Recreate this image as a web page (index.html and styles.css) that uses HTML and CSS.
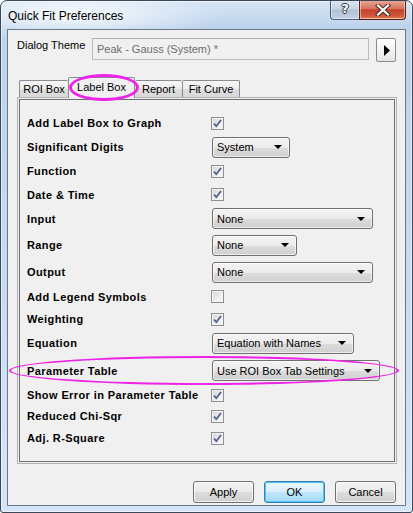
FILE: index.html
```
<!DOCTYPE html>
<html>
<head>
<meta charset="utf-8">
<link rel="stylesheet" href="styles.css">
</head>
<body>
<div class="window">
  <div class="titlebar">
    <span class="title">Quick Fit Preferences</span>
    <div class="caption-btns">
      <div class="cap help"><span class="cap-glyph">?</span></div>
      <div class="cap close">
        <svg width="16" height="12" viewBox="0 0 16 12"><path d="M3 1.5 L13 10.5 M13 1.5 L3 10.5" stroke="#4a2a22" stroke-width="4.2" stroke-linecap="square"/><path d="M3 1.5 L13 10.5 M13 1.5 L3 10.5" stroke="#ffffff" stroke-width="2.2" stroke-linecap="square"/></svg>
      </div>
    </div>
  </div>
  <div class="client">
    <div class="theme-row">
      <span class="theme-label">Dialog Theme</span>
      <div class="theme-input">Peak - Gauss (System) *</div>
      <div class="arrow-btn"><svg width="6" height="11" viewBox="0 0 6 11"><path d="M0 0 L6 5.5 L0 11 Z" fill="#000"/></svg></div>
    </div>
    <div class="tabs">
      <div class="tab t-roi">ROI Box</div>
      <div class="tab t-label active">Label Box<span class="hl-tab"></span></div>
      <div class="tab t-report">Report</div>
      <div class="tab t-fit">Fit Curve</div>
    </div>
    <div class="panel">
      <div class="panel-inner">
        <div class="grid">
          <div class="lbl">Add Label Box to Graph</div>
          <div class="ctl"><span class="chk on"><svg width="9" height="9" viewBox="0 0 9 9"><path d="M1 4.5 L3.3 7.2 L8 1" stroke="#4a5c92" stroke-width="1.7" fill="none"/></svg></span></div>

          <div class="lbl">Significant Digits</div>
          <div class="ctl"><div class="combo w-sys"><span>System</span><i class="dd"></i></div></div>

          <div class="lbl">Function</div>
          <div class="ctl"><span class="chk on"><svg width="9" height="9" viewBox="0 0 9 9"><path d="M1 4.5 L3.3 7.2 L8 1" stroke="#4a5c92" stroke-width="1.7" fill="none"/></svg></span></div>

          <div class="lbl">Date &amp; Time</div>
          <div class="ctl"><span class="chk on"><svg width="9" height="9" viewBox="0 0 9 9"><path d="M1 4.5 L3.3 7.2 L8 1" stroke="#4a5c92" stroke-width="1.7" fill="none"/></svg></span></div>

          <div class="lbl">Input</div>
          <div class="ctl"><div class="combo w-long"><span>None</span><i class="dd"></i></div></div>

          <div class="lbl">Range</div>
          <div class="ctl"><div class="combo w-range"><span>None</span><i class="dd"></i></div></div>

          <div class="lbl">Output</div>
          <div class="ctl"><div class="combo w-long"><span>None</span><i class="dd"></i></div></div>

          <div class="lbl">Add Legend Symbols</div>
          <div class="ctl"><span class="chk"></span></div>

          <div class="lbl">Weighting</div>
          <div class="ctl"><span class="chk on"><svg width="9" height="9" viewBox="0 0 9 9"><path d="M1 4.5 L3.3 7.2 L8 1" stroke="#4a5c92" stroke-width="1.7" fill="none"/></svg></span></div>

          <div class="lbl">Equation</div>
          <div class="ctl"><div class="combo w-eq"><span>Equation with Names</span><i class="dd"></i></div></div>

          <div class="lbl">Parameter Table</div>
          <div class="ctl"><div class="combo w-param"><span>Use ROI Box Tab Settings</span><i class="dd"></i></div></div>

          <div class="lbl">Show Error in Parameter Table</div>
          <div class="ctl"><span class="chk on"><svg width="9" height="9" viewBox="0 0 9 9"><path d="M1 4.5 L3.3 7.2 L8 1" stroke="#4a5c92" stroke-width="1.7" fill="none"/></svg></span></div>

          <div class="lbl">Reduced Chi-Sqr</div>
          <div class="ctl"><span class="chk on"><svg width="9" height="9" viewBox="0 0 9 9"><path d="M1 4.5 L3.3 7.2 L8 1" stroke="#4a5c92" stroke-width="1.7" fill="none"/></svg></span></div>

          <div class="lbl">Adj. R-Square</div>
          <div class="ctl"><span class="chk on"><svg width="9" height="9" viewBox="0 0 9 9"><path d="M1 4.5 L3.3 7.2 L8 1" stroke="#4a5c92" stroke-width="1.7" fill="none"/></svg></span></div>
        </div>
      </div>
      <span class="hl-param"></span>
    </div>
    <div class="buttons">
      <div class="btn">Apply</div>
      <div class="btn default">OK</div>
      <div class="btn">Cancel</div>
    </div>
  </div>
</div>
</body>
</html>
```

FILE: styles.css
```
* { box-sizing: border-box; }
html, body { margin: 0; padding: 0; background: #ffffff; }
body { font-family: "Liberation Sans", Arial, sans-serif; font-size: 11px; color: #000; }

.window {
  width: 413px;
  height: 513px;
  border: 1px solid #3b4656;
  border-radius: 7px 7px 3px 3px;
  padding: 0 6px 6px 6px;
  display: flex;
  flex-direction: column;
  overflow: hidden;
  background:
    radial-gradient(ellipse 150px 26px at 70px 14px, rgba(255,255,255,0.85), rgba(255,255,255,0) 100%),
    linear-gradient(180deg, #d6e5f5 0px, #bcd3ec 28px, #c3d8ef 200px, #d4e5f7 513px);
  box-shadow: inset 0 0 0 1px rgba(255,255,255,0.55);
}

.titlebar {
  height: 28px;
  flex-shrink: 0;
  display: flex;
  justify-content: space-between;
  align-items: flex-start;
}
.title {
  font-size: 12px;
  margin-left: 1px;
  margin-top: 8px;
  color: #000;
}
.caption-btns {
  display: flex;
  margin-top: -1px;
}
.cap {
  height: 20px;
  border: 1px solid #4b5b70;
  border-top: none;
  display: flex;
  align-items: center;
  justify-content: center;
  box-shadow: inset 0 0 0 1px rgba(255,255,255,0.45);
}
.help {
  width: 29px;
  border-radius: 0 0 0 4px;
  border-right: none;
  background: linear-gradient(180deg, #dfe8f2 0%, #c6d4e3 48%, #afc0d3 52%, #c2d3e6 100%);
}
.cap-glyph {
  font-family: "DejaVu Sans", sans-serif;
  font-weight: bold;
  font-size: 13px;
  color: #ffffff;
  text-shadow: 0 0 1px #2b3a4d, 1px 0 0 #2b3a4d, -1px 0 0 #2b3a4d, 0 1px 0 #2b3a4d, 0 -1px 0 #2b3a4d;
  margin-top: -2px;
}
.close {
  width: 47px;
  border-radius: 0 0 4px 0;
  border-color: #5a2217;
  background: linear-gradient(180deg, #e9a99a 0%, #d9735d 45%, #c2402a 52%, #d25a3d 85%, #e08a63 100%);
}

.client {
  flex: 1;
  min-height: 0;
  border: 1px solid #6a7888;
  background: #f0f0f0;
  display: flex;
  flex-direction: column;
}

.theme-row {
  margin-top: 8px;
  padding-left: 9px;
  height: 24px;
  flex-shrink: 0;
  display: flex;
  align-items: flex-start;
}
.theme-label {
  width: 75px;
  line-height: 15px;
}
.theme-input {
  width: 277px;
  height: 22px;
  border: 1px solid #bcbcbc;
  border-top-color: #aeaeae;
  background: #f0f0f0;
  color: #6d6d6d;
  padding: 3px 0 0 4px;
  line-height: 14px;
}
.arrow-btn {
  margin-left: 7px;
  width: 20px;
  height: 24px;
  border: 1px solid #8a8a8a;
  border-radius: 2px;
  background: linear-gradient(180deg, #ffffff 0%, #f3f3f3 50%, #e4e4e4 100%);
  display: flex;
  align-items: center;
  justify-content: center;
  padding-left: 1px;
}

.tabs {
  margin-top: 14px;
  height: 21px;
  flex-shrink: 0;
  padding-left: 11px;
  display: flex;
  align-items: flex-end;
  position: relative;
  z-index: 2;
}
.tab {
  height: 17px;
  border: 1px solid #898c95;
  border-bottom: none;
  border-right: none;
  background: linear-gradient(180deg, #f6f6f6 0%, #ececec 50%, #dedede 51%, #d8d8d8 100%);
  text-align: center;
  line-height: 16px;
  border-radius: 2px 2px 0 0;
}
.t-roi { width: 49px; }
.t-label { width: 67px; }
.t-report { width: 47px; }
.t-fit { width: 58px; border-right: 1px solid #898c95; }
.tab.active {
  height: 21px;
  margin-bottom: -1px;
  border-right: 1px solid #898c95;
  background: #f0f0f0;
  line-height: 19px;
  position: relative;
}
.tab.active + .tab { border-left: none; }
.hl-tab {
  position: absolute;
  left: 0px;
  top: -4px;
  width: 70px;
  height: 27px;
  border: 3px solid #ee22e8;
  border-radius: 50%;
}

.panel {
  position: relative;
  flex-shrink: 0;
  margin-left: 9px;
  width: 380px;
  height: 367px;
  border: 1px solid #b4b4b4;
  padding: 1px;
}
.panel-inner {
  height: 100%;
  border: 1px solid #6f6f6f;
  padding: 11px 0 0 7px;
}
.grid {
  display: grid;
  grid-template-columns: 184px 1fr;
  grid-template-rows: 24px 24px 24px 23px 25px 28px 26px 23px 22px 26px 29px 20px 22px 22px;
}
.lbl {
  font-weight: bold;
  display: flex;
  align-items: center;
  letter-spacing: 0.4px;
}
.ctl {
  display: flex;
  align-items: center;
}
.chk {
  width: 13px;
  height: 13px;
  border: 1px solid #8e8f8f;
  background: linear-gradient(135deg, #d3d3d3 0%, #ececec 55%, #fbfbfb 100%);
  box-shadow: inset 0 0 0 1px #f4f4f4;
  display: flex;
  align-items: center;
  justify-content: center;
}
.combo {
  height: 21px;
  border: 1px solid #707070;
  border-radius: 3px;
  background: linear-gradient(180deg, #f3f3f3 0%, #ebebeb 50%, #dddddd 51%, #cfcfcf 100%);
  box-shadow: inset 0 0 0 1px rgba(255,255,255,0.6);
  display: flex;
  align-items: center;
  justify-content: space-between;
  padding: 0 7px 0 4px;
  margin-left: 1px;
}
.dd {
  width: 0;
  height: 0;
  border-left: 4px solid transparent;
  border-right: 4px solid transparent;
  border-top: 4px solid #000;
}
.w-sys { width: 78px; }
.w-long { width: 161px; }
.w-range { width: 85px; }
.w-eq { width: 142px; }
.w-param { width: 168px; }

.hl-param {
  position: absolute;
  left: -9px;
  top: 258px;
  width: 390px;
  height: 29px;
  border: 2px solid #ee22e8;
  border-radius: 50%;
}

.buttons {
  margin-top: 17px;
  flex-shrink: 0;
  display: flex;
  justify-content: flex-end;
  gap: 10px;
  padding-right: 9px;
}
.btn {
  width: 61px;
  height: 22px;
  border: 1px solid #707070;
  border-radius: 3px;
  background: linear-gradient(180deg, #f2f2f2 0%, #ebebeb 50%, #dddddd 51%, #cfcfcf 100%);
  box-shadow: inset 0 0 0 1px rgba(255,255,255,0.7);
  text-align: center;
  line-height: 20px;
}
.btn.default {
  border-color: #3c7fb1;
  background: linear-gradient(180deg, #eaf6fd 0%, #d9f0fc 50%, #bee6fd 51%, #a7d9f5 100%);
  box-shadow: inset 0 0 0 1px #48c7f5;
}
```
